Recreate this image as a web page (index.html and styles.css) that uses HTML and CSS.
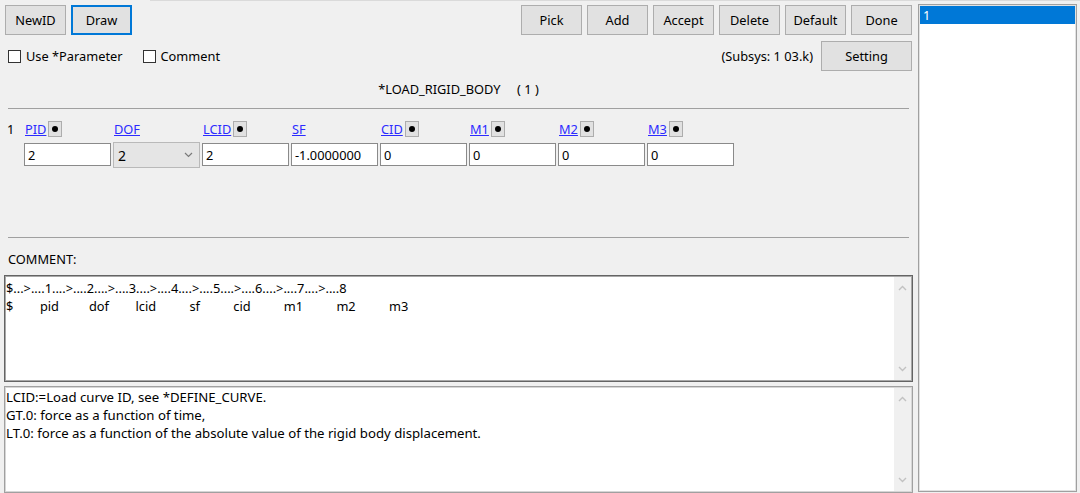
FILE: index.html
```html
<!DOCTYPE html>
<html lang="en">
<head>
<meta charset="UTF-8">
<meta name="viewport" content="width=device-width, initial-scale=1.0">
<title>*LOAD_RIGID_BODY</title>
<link rel="stylesheet" href="styles.css">
</head>
<body>
    <div class="topline"></div>
    <div class="window">
        <div class="editor">
            <div class="toolbar">
                <div class="btn-group">
                    <button type="button" class="btn">NewID</button>
                    <button type="button" class="btn btn-focus">Draw</button>
                </div>
                <div class="btn-group">
                    <button type="button" class="btn">Pick</button>
                    <button type="button" class="btn">Add</button>
                    <button type="button" class="btn">Accept</button>
                    <button type="button" class="btn">Delete</button>
                    <button type="button" class="btn">Default</button>
                    <button type="button" class="btn">Done</button>
                </div>
            </div>

            <div class="options">
                <label class="check"><input type="checkbox">Use *Parameter</label>
                <label class="check"><input type="checkbox">Comment</label>
                <span class="subsys">(Subsys: 1 03.k)</span>
                <button type="button" class="btn btn-wide">Setting</button>
            </div>

            <div class="title">*LOAD_RIGID_BODY     ( 1 )</div>
            <div class="sep"></div>

            <div class="card-row">
                <div class="rownum">1</div>
                <div class="field">
                    <div class="field-head"><a class="field-name">PID</a><button type="button" class="pick-dot"></button></div>
                    <input type="text" class="field-input" value="2">
                </div>
                <div class="field">
                    <div class="field-head"><a class="field-name">DOF</a></div>
                    <div class="field-select">
                        <span>2</span>
                        <svg width="9" height="6" viewBox="0 0 9 6"><polyline points="1,1 4.5,4.5 8,1" fill="none" stroke="#7a7a7a" stroke-width="1.2"/></svg>
                    </div>
                </div>
                <div class="field">
                    <div class="field-head"><a class="field-name">LCID</a><button type="button" class="pick-dot"></button></div>
                    <input type="text" class="field-input" value="2">
                </div>
                <div class="field">
                    <div class="field-head"><a class="field-name">SF</a></div>
                    <input type="text" class="field-input" value="-1.0000000">
                </div>
                <div class="field">
                    <div class="field-head"><a class="field-name">CID</a><button type="button" class="pick-dot"></button></div>
                    <input type="text" class="field-input" value="0">
                </div>
                <div class="field">
                    <div class="field-head"><a class="field-name">M1</a><button type="button" class="pick-dot"></button></div>
                    <input type="text" class="field-input" value="0">
                </div>
                <div class="field">
                    <div class="field-head"><a class="field-name">M2</a><button type="button" class="pick-dot"></button></div>
                    <input type="text" class="field-input" value="0">
                </div>
                <div class="field">
                    <div class="field-head"><a class="field-name">M3</a><button type="button" class="pick-dot"></button></div>
                    <input type="text" class="field-input" value="0">
                </div>
            </div>
            <div class="sep sep-low"></div>

            <div class="comment-label">COMMENT:</div>
            <div class="textbox">
                <div class="textbox-body">$...&gt;....1....&gt;....2....&gt;....3....&gt;....4....&gt;....5....&gt;....6....&gt;....7....&gt;....8
$        pid         dof        lcid          sf          cid          m1          m2          m3</div>
                <div class="vscroll">
                    <svg width="9" height="6" viewBox="0 0 9 6"><polyline points="1,5 4.5,1.5 8,5" fill="none" stroke="#c2c2c2" stroke-width="1.4"/></svg>
                    <svg width="9" height="6" viewBox="0 0 9 6"><polyline points="1,1 4.5,4.5 8,1" fill="none" stroke="#c2c2c2" stroke-width="1.4"/></svg>
                </div>
            </div>
            <div class="textbox textbox-help">
                <div class="textbox-body">LCID:=Load curve ID, see *DEFINE_CURVE.
GT.0: force as a function of time,
LT.0: force as a function of the absolute value of the rigid body displacement.</div>
                <div class="vscroll">
                    <svg width="9" height="6" viewBox="0 0 9 6"><polyline points="1,5 4.5,1.5 8,5" fill="none" stroke="#c2c2c2" stroke-width="1.4"/></svg>
                    <svg width="9" height="6" viewBox="0 0 9 6"><polyline points="1,1 4.5,4.5 8,1" fill="none" stroke="#c2c2c2" stroke-width="1.4"/></svg>
                </div>
            </div>
        </div>

        <div class="idlist">
            <div class="id-item selected">1</div>
        </div>
    </div>
</body>
</html>
```

FILE: styles.css
```css
body {
    margin: 0;
    height: 493px;
    overflow: hidden;
    background-color: #f0f0f0;
    font-family: "Noto Sans", "Open Sans", sans-serif;
    font-size: 12.8px;
    color: #000;
}
.topline {
    height: 1px;
    margin-left: 150px;
    background-color: #dadada;
}
.window {
    display: flex;
    gap: 5px;
    height: 492px;
    padding: 3px 3px 0 4px;
    box-sizing: border-box;
}
.editor {
    width: 909px;
    display: flex;
    flex-direction: column;
}
.toolbar {
    display: flex;
    justify-content: space-between;
    margin: 1px 1px 0 1px;
}
.btn-group {
    display: flex;
    gap: 5px;
}
.btn {
    width: 61px;
    height: 30px;
    padding: 0;
    border: 1px solid #adadad;
    background-color: #e1e1e1;
    font: inherit;
    color: #000;
    box-sizing: border-box;
}
.btn-focus {
    border: 2px solid #0078d7;
}
.btn-wide {
    width: 91px;
}
.options {
    display: flex;
    align-items: center;
    height: 30px;
    margin: 6px 1px 0 0;
    padding-left: 4px;
}
.check {
    display: flex;
    align-items: center;
    gap: 5px;
    margin-right: 20px;
}
.check input {
    appearance: none;
    width: 13px;
    height: 13px;
    margin: 0;
    border: 1px solid #333;
    background-color: #fff;
}
.subsys {
    margin-left: auto;
    margin-right: 8px;
}
.title {
    margin-top: 9px;
    line-height: 18px;
    text-align: center;
    white-space: pre;
}
.sep {
    height: 1px;
    margin: 10px 4px 0 4px;
    background-color: #a0a0a0;
}
.sep-low {
    margin-top: 0;
}
.card-row {
    display: flex;
    align-items: flex-start;
    gap: 2px;
    height: 128px;
    padding-top: 12px;
    box-sizing: border-box;
}
.rownum {
    width: 18px;
    padding-left: 3px;
    line-height: 16px;
    box-sizing: border-box;
}
.field {
    width: 87px;
    display: flex;
    flex-direction: column;
}
.field-head {
    display: flex;
    align-items: center;
    gap: 2px;
    height: 16px;
    padding-left: 1px;
}
.field-name {
    color: #2b2bff;
    text-decoration: underline;
}
.pick-dot {
    width: 14px;
    height: 16px;
    padding: 0;
    border: 1px solid #adadad;
    background-color: #e1e1e1;
    display: flex;
    align-items: center;
    justify-content: center;
}
.pick-dot::after {
    content: "";
    width: 6px;
    height: 6px;
    border-radius: 50%;
    background-color: #000;
}
.field-input {
    width: 87px;
    height: 23px;
    margin: 6px 0 0 0;
    padding: 0 3px;
    border: 1px solid #8a8a8a;
    background-color: #fff;
    font: inherit;
    color: #000;
    box-sizing: border-box;
}
.field-select {
    height: 26px;
    margin-top: 5px;
    padding: 0 6px 0 4px;
    border: 1px solid #b9b9b9;
    background-color: #e5e5e5;
    display: flex;
    align-items: center;
    justify-content: space-between;
    font-size: 14px;
    box-sizing: border-box;
}
.comment-label {
    margin: 12px 0 0 4px;
    line-height: 18px;
}
.textbox {
    display: flex;
    height: 107px;
    margin-top: 7px;
    border: 1px solid #646464;
    box-shadow: inset 0 0 0 1px #a8a8a8;
    background-color: #fff;
    box-sizing: border-box;
}
.textbox-help {
    margin-top: 4px;
    border-color: #a0a0a0;
    box-shadow: inset 0 0 0 1px #d6d6d6;
}
.textbox-body {
    flex: 1;
    padding: 3px 0 0 1px;
    line-height: 18px;
    white-space: pre;
    overflow: hidden;
}
.textbox-help .textbox-body {
    padding-top: 1px;
    font-size: 13.2px;
}
.vscroll {
    width: 17px;
    margin: 1px 1px 1px 0;
    padding: 8px 0;
    background-color: #f0f0f0;
    display: flex;
    flex-direction: column;
    justify-content: space-between;
    align-items: center;
}
.idlist {
    width: 159px;
    height: 488px;
    padding: 1px;
    border: 1px solid #a0a0a0;
    box-shadow: inset 0 0 0 1px #e2e2e2;
    background-color: #fff;
    box-sizing: border-box;
}
.id-item {
    height: 18px;
    line-height: 18px;
    padding-left: 3px;
}
.id-item.selected {
    background-color: #0078d7;
    color: #fff;
}
```
